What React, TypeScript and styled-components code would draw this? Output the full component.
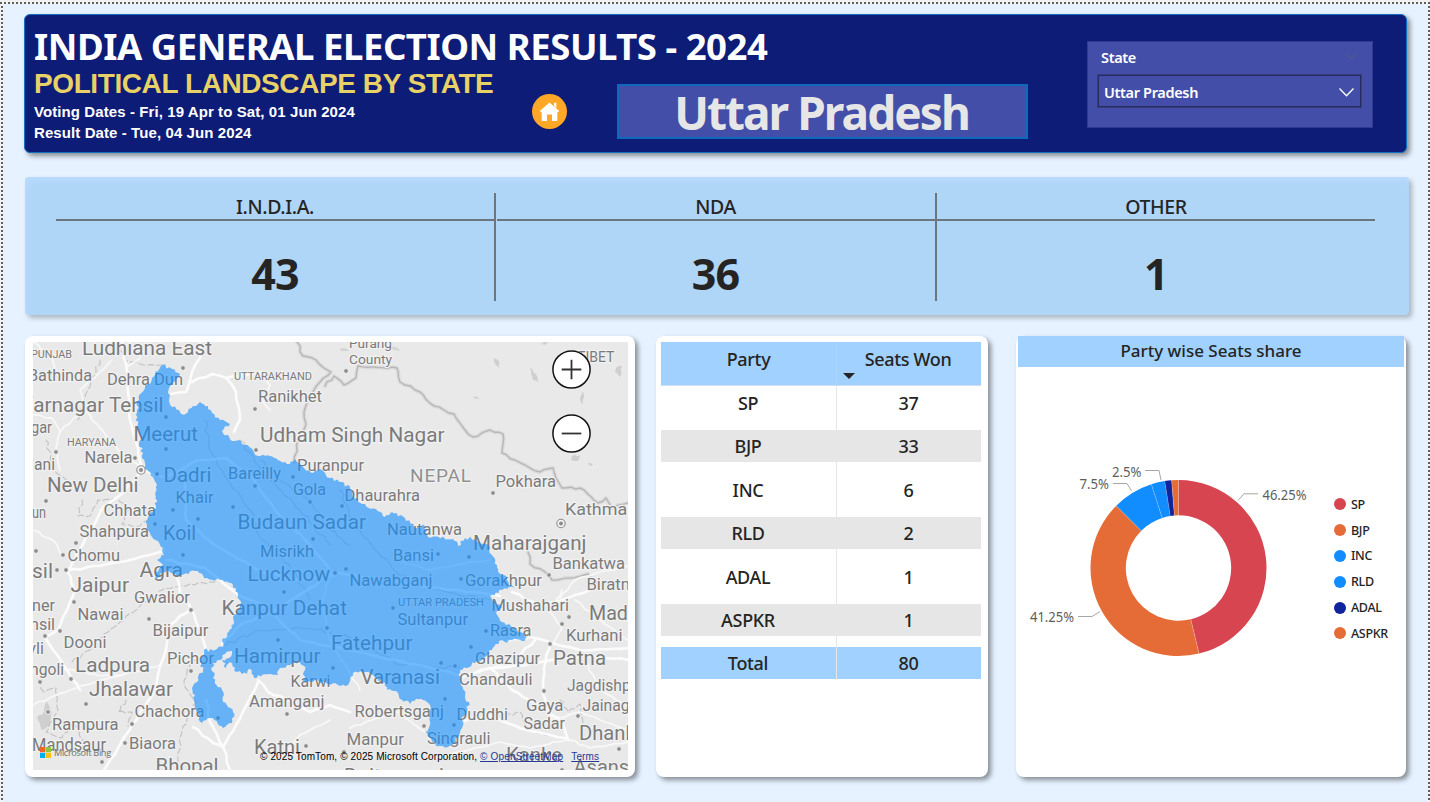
import React from "react";
import styled, { createGlobalStyle } from "styled-components";

const UI = `"Noto Sans", "Open Sans", sans-serif`;
const ARIAL = `"Liberation Sans", Arial, sans-serif`;

const GlobalStyle = createGlobalStyle`
  *, *::before, *::after { box-sizing: border-box; }
  html, body { margin: 0; padding: 0; background: #e6f2ff; }
  body { overflow: hidden; }
`;

const Page = styled.div`
  width: 1430px;
  height: 802px;
  padding: 14px 21px 0 24px;
  font-family: ${UI};
  color: #252423;
  background:
    repeating-linear-gradient(90deg, #605e5c 0 2px, #f4f4f4 2px 4px) 0 2px / 100% 2px no-repeat,
    repeating-linear-gradient(180deg, #605e5c 0 2px, #f4f4f4 2px 4px) 1px 2px / 2px 100% no-repeat,
    repeating-linear-gradient(180deg, #605e5c 0 2px, #f4f4f4 2px 4px) 1428px 2px / 2px 100% no-repeat,
    linear-gradient(#f1f1f1, #f1f1f1) 0 0 / 100% 2px no-repeat,
    linear-gradient(#f1f1f1, #f1f1f1) 0 0 / 1px 100% no-repeat,
    #e6f2ff;
`;

/* ---------- Header ---------- */

const Header = styled.header`
  display: flex;
  width: 1383px;
  height: 139px;
  padding-left: 9px;
  border: 1px solid #1170c0;
  border-radius: 6px;
  background: #0d1c76;
  box-shadow: 3px 3px 5px rgba(0, 0, 0, 0.42);
`;

const Headings = styled.div`
  width: 498px;
  padding-top: 11px;
  white-space: nowrap;
`;

const Title = styled.h1`
  margin: 0;
  font-size: 36.5px;
  line-height: 40px;
  font-weight: 700;
  letter-spacing: -0.47px;
  color: #fff;
`;

const Subtitle = styled.h2`
  margin: 1px 0 0;
  font: 700 28px/34px ${ARIAL};
  letter-spacing: -0.41px;
  color: #e8d166;
`;

const Dates = styled.p`
  margin: 0;
  font: 700 15px/21px ${ARIAL};
  letter-spacing: 0.09px;
  color: #fff;
`;

const HomeButton = styled.button`
  width: 35px;
  height: 35px;
  margin: 79px 50px 0 0;
  padding: 0;
  border: 0;
  border-radius: 50%;
  background: #ffa726;
  svg { display: block; }
`;

const StateTitle = styled.div`
  width: 411px;
  height: 55px;
  margin: 69px 59px 0 0;
  border: 2px solid #1068bd;
  background: #434ea8;
  color: #e6e6e6;
  font-size: 46px;
  line-height: 52px;
  font-weight: 700;
  letter-spacing: -1.95px;
  text-indent: -2px;
  text-align: center;
`;

const Slicer = styled.div`
  width: 286px;
  height: 87px;
  margin-top: 26px;
  padding: 5px 12px 0 10px;
  border: 1px solid #2f3a95;
  background: #434ea8;
  color: #fff;
  font-size: 14.5px;
  font-weight: 600;
  letter-spacing: -0.34px;
`;

const SlicerHead = styled.div`
  display: flex;
  align-items: center;
  justify-content: space-between;
  height: 20px;
  padding: 0 3px 0 3px;
`;

const Dropdown = styled.div`
  display: flex;
  align-items: center;
  justify-content: space-between;
  width: 263px;
  height: 32px;
  margin: 8px 0 0 0;
  padding: 2px 5px 0 5px;
  border: 1px solid #272c5e;
  outline: 0.5px solid #363d80;
`;

/* ---------- Alliance cards ---------- */

const Alliances = styled.section`
  display: grid;
  grid-template-columns: 438px 438px 438px;
  column-gap: 2.5px;
  width: 1384px;
  height: 138px;
  margin: 24px 0 0 1px;
  padding: 16px 31px 0;
  border-radius: 4px;
  background: #afd5f7;
  box-shadow: inset 2px 4px 6px #b9dbff, 3px 3px 5px rgba(0, 0, 0, 0.25);
`;

const Alliance = styled.div<{ $divided: boolean }>`
  height: 108px;
  text-align: center;
  box-shadow: ${(p) => (p.$divided ? "2px 0 0 #6c767f" : "none")};
`;

const AllianceName = styled.div`
  height: 27.5px;
  border-bottom: 2px solid #6c767f;
  font-size: 19.5px;
  line-height: 27px;
  letter-spacing: -0.38px;
  font-weight: 500;
`;

const AllianceSeats = styled.div`
  margin-top: 25px;
  font-size: 43px;
  line-height: 56px;
  font-weight: 700;
  letter-spacing: -0.8px;
`;

/* ---------- Lower row ---------- */

const Row = styled.div`
  display: flex;
  margin: 21px 0 0 1px;
`;

const Card = styled.section<{ $w: number; $gap: number }>`
  flex: none;
  width: ${(p) => p.$w}px;
  height: 441px;
  margin-right: ${(p) => p.$gap}px;
  border-radius: 8px;
  background: #fff;
  box-shadow: 3px 3px 5px rgba(0, 0, 0, 0.42);
`;

const MapCard = styled(Card)`
  position: relative;
  padding: 6px 0 0 8px;
`;

const MapSvg = styled.svg`
  display: block;
  font-family: Roboto, sans-serif;
`;

const ZoomButtons = styled.div`
  position: absolute;
  left: 526.5px;
  top: 13.7px;
  display: flex;
  flex-direction: column;
  gap: 25px;
`;

const ZoomButton = styled.button`
  display: block;
  width: 39px;
  height: 39px;
  padding: 0;
  border: 0;
  border-radius: 50%;
  background: #fff;
  svg { display: block; }
`;

const BingMark = styled.div`
  position: absolute;
  left: 15px;
  top: 410px;
  display: flex;
  align-items: center;
  gap: 3px;
  font: 500 9.2px/13px "Open Sans", sans-serif;
  letter-spacing: -0.36px;
  color: #6f6f6f;
`;

const Attribution = styled.div`
  position: absolute;
  left: 235px;
  top: 414px;
  font: 10px/13px ${ARIAL};
  letter-spacing: 0.12px;
  color: #000;
  white-space: pre;
`;

const MapLink = styled.a`
  color: #243a96;
  text-decoration: underline;
  margin-right: 8px;
  letter-spacing: 0.16px;
`;

/* ---------- Table ---------- */

const Table = styled.table`
  width: 320px;
  margin: 6px 0 0 5px;
  border-collapse: separate;
  border-spacing: 0;
  table-layout: fixed;
  font-size: 18px;
  font-weight: 500;
  letter-spacing: -0.33px;
  text-align: center;
`;

const HeadCell = styled.th`
  height: 44px;
  padding: 0;
  vertical-align: top;
  font-weight: 500;
  line-height: 35px;
  background: #a0d1ff;
  border-bottom: 1px solid #cfdfee;
  &:first-child { width: 175px; }
  & + & { border-left: 1px solid #acd5fc; padding-right: 2px; }
`;

const SortArrow = styled.span`
  display: block;
  width: 0;
  height: 0;
  margin: -4px 0 0 6px;
  border: 6px solid transparent;
  border-top-color: #252423;
  border-bottom: 0;
`;

const Cell = styled.td<{ $h: number }>`
  height: ${(p) => p.$h}px;
  padding: 0;
  vertical-align: top;
  & + & { border-left: 1px solid #e6e6e6; }
`;

const CellText = styled.div<{ $tone: string; $shift?: number }>`
  height: 32px;
  line-height: ${(p) => 34 - (p.$shift ?? 0)}px;
  padding-right: 1px;
  background: ${(p) => p.$tone};
`;

/* ---------- Donut ---------- */

const DonutTitle = styled.h3`
  margin: 0 2px;
  height: 31px;
  background: #a0d1ff;
  font-size: 17px;
  line-height: 29px;
  font-weight: 500;
  letter-spacing: 0;
  text-align: center;
`;

const DonutBody = styled.div`
  display: flex;
  padding-top: 83px;
`;

const Legend = styled.ul`
  list-style: none;
  margin: 41.5px 0 0 0;
  padding: 0;
  font-size: 12.5px;
  font-weight: 500;
  letter-spacing: -0.32px;
`;

const LegendItem = styled.li<{ $color: string }>`
  display: flex;
  align-items: center;
  gap: 5px;
  height: 25.8px;
  &::before {
    content: "";
    width: 12px;
    height: 12px;
    border-radius: 50%;
    background: ${(p) => p.$color};
  }
`;

/* ---------- Data ---------- */

const alliances = [
  { name: "I.N.D.I.A.", seats: 43 },
  { name: "NDA", seats: 36 },
  { name: "OTHER", seats: 1 },
];

const parties = [
  { name: "SP", seats: 37, color: "#d64550" },
  { name: "BJP", seats: 33, color: "#e66c37" },
  { name: "INC", seats: 6, color: "#118dff" },
  { name: "RLD", seats: 2, color: "#118dff" },
  { name: "ADAL", seats: 1, color: "#12239e" },
  { name: "ASPKR", seats: 1, color: "#e66c37" },
];

const total = parties.reduce((s, p) => s + p.seats, 0);
const rowHeights = [44, 43.5, 43.5, 43, 44, 42.6];
const textLift = [0, 2, 2, 2, 0, 2];

type Pt = [number, number];

const upOutline: Pt[] = [
  [162, 365], [172, 369], [180, 374], [176, 381], [169, 388], [169, 400], [172, 407], [179, 410], [181, 414], [188, 412],
  [193, 406], [200, 402], [208, 406], [212, 413], [220, 420], [230, 424], [222, 431], [232, 441], [241, 441], [245, 445],
  [253, 450], [258, 456], [270, 456], [278, 460], [287, 464], [295, 459], [303, 467], [313, 473], [320, 469], [330, 478],
  [350, 487], [353, 497], [365, 504], [385, 517], [392, 512], [405, 518], [414, 527], [425, 526], [428, 537], [453, 539],
  [458, 546], [465, 538], [475, 539], [488, 545], [492, 555], [497, 565], [498, 572], [507, 577], [509, 585], [515, 588],
  [502, 590], [490, 596], [495, 602], [502, 607], [496, 613], [502, 622], [517, 630], [527, 637], [522, 641], [512, 640],
  [507, 643], [499, 641], [492, 650], [475, 663], [460, 670], [461, 682], [465, 697], [469, 702], [467, 712], [462, 717],
  [462, 728], [458, 738], [452, 745], [440, 746], [432, 742], [425, 732], [430, 725], [430, 705], [423, 700], [412, 701],
  [410, 704], [402, 700], [398, 693], [387, 690], [385, 683], [375, 678], [368, 672], [353, 673], [348, 685], [338, 685],
  [328, 684], [315, 680], [303, 681], [305, 670], [300, 660], [290, 665], [280, 668], [278, 675], [258, 675], [254, 678],
  [250, 666], [247, 674], [237, 672], [230, 662], [226, 668], [222, 660], [229, 658], [232, 651], [225, 654], [220, 660],
  [213, 663], [213, 678], [222, 690], [223, 702], [233, 712],
  [232, 723], [223, 728], [210, 718], [202, 723], [195, 708], [195, 695], [192, 688], [197, 682], [203, 670], [200, 662],
  [204, 650], [215, 650], [223, 647], [222, 641], [232, 628], [233, 617], [240, 605], [238, 595], [233, 585], [220, 580],
  [207, 578], [195, 571], [177, 576], [167, 570], [155, 579], [155, 572], [163, 565], [157, 560], [164, 555], [163, 548],
  [152, 537], [147, 525], [148, 517], [156, 508], [157, 485], [147, 470], [142, 458], [139, 432], [136, 415], [139, 395],
  [145, 388], [152, 378],
];

/* Adds small deterministic jogs along every edge so a coarse outline reads as a surveyed one. */
function rough(points: Pt[], amp: number, step: number, closed: boolean) {
  let seed = 7;
  const rnd = () => {
    seed = (seed * 16807) % 2147483647;
    return seed / 2147483647 - 0.5;
  };
  let d = `M${points[0][0]} ${points[0][1]}`;
  const n = closed ? points.length : points.length - 1;
  for (let i = 0; i < n; i++) {
    const [x1, y1] = points[i];
    const [x2, y2] = points[(i + 1) % points.length];
    const len = Math.hypot(x2 - x1, y2 - y1);
    const k = Math.max(1, Math.round(len / step));
    for (let j = 1; j <= k; j++) {
      const t = j / k;
      const o = j === k ? 0 : rnd() * 2 * amp;
      const nx = -(y2 - y1) / (len || 1);
      const ny = (x2 - x1) / (len || 1);
      d += `L${(x1 + (x2 - x1) * t + nx * o).toFixed(1)} ${(y1 + (y2 - y1) * t + ny * o).toFixed(1)}`;
    }
  }
  return closed ? d + "Z" : d;
}

const majorRoads: Pt[][] = [
  [[122, 342], [127, 372], [130, 420], [138, 448], [141, 470]],
  [[138, 475], [124, 492], [104, 506], [92, 528], [70, 568], [67, 571]],
  [[67, 571], [120, 562], [164, 551]],
  [[67, 571], [75, 590], [70, 602], [58, 630], [45, 637], [62, 662], [80, 690]],
  [[176, 575], [180, 592], [191, 608], [199, 628], [206, 650]],
  [[191, 608], [170, 625], [166, 650], [160, 666], [156, 690], [133, 724], [118, 748], [104, 770]],
  [[206, 700], [210, 722], [223, 747], [236, 725], [250, 698], [258, 682]],
  [[258, 680], [268, 692], [286, 699], [310, 712], [330, 705], [350, 712]],
  [[223, 747], [230, 770]],
  [[193, 727], [213, 743], [223, 747]],
  [[200, 342], [200, 358], [192, 372], [186, 392], [171, 394]],
  [[192, 382], [212, 374], [226, 378], [238, 376], [262, 372]],
  [[226, 378], [236, 392], [240, 420], [234, 432]],
  [[462, 678], [480, 670], [530, 664], [560, 658], [590, 656], [628, 660]],
  [[507, 641], [530, 637], [552, 643], [580, 650], [628, 648]],
  [[535, 640], [512, 662], [478, 672]],
  [[490, 668], [512, 690], [540, 706], [563, 722], [568, 740]],
  [[462, 722], [490, 716], [520, 728], [565, 738]],
  [[512, 592], [540, 606], [562, 600], [590, 590]],
  [[550, 642], [544, 668], [543, 694], [552, 720]],
  [[141, 470], [165, 478], [198, 460], [226, 458], [250, 476], [275, 510], [310, 545], [335, 575]],
  [[184, 480], [186, 520], [215, 545], [262, 572], [300, 580], [335, 575]],
  [[166, 560], [205, 568], [240, 596], [262, 604], [300, 640], [360, 652], [430, 668], [462, 675]],
  [[222, 644], [240, 625], [272, 612], [310, 588], [335, 572], [380, 580], [440, 588], [500, 596]],
];

const minorRoads: Pt[][] = [
  [[33, 415], [52, 418], [60, 432], [56, 448], [60, 470]],
  [[60, 432], [74, 418], [86, 410], [80, 390], [100, 372], [112, 360]],
  [[86, 412], [100, 428], [118, 450], [140, 466]],
  [[33, 342], [50, 355], [60, 380]],
  [[150, 342], [140, 358], [128, 366]],
  [[33, 530], [55, 542], [62, 556]],
  [[262, 372], [270, 385], [262, 400], [270, 410]],
  [[350, 728], [372, 720], [398, 712], [425, 732]],
  [[33, 705], [50, 698], [70, 690], [100, 680], [150, 668]],
  [[160, 665], [120, 675], [100, 676], [60, 668]],
  [[280, 760], [300, 735], [330, 720]],
  [[560, 598], [575, 580], [600, 572], [628, 566]],
  [[575, 600], [600, 620], [628, 640]],
  [[562, 590], [550, 612], [562, 628], [553, 643]],
  [[585, 660], [600, 690], [628, 706]],
  [[552, 720], [580, 712], [628, 730]],
  [[570, 740], [590, 748], [628, 742]],
  [[430, 760], [460, 752], [500, 742], [530, 748], [566, 740]],
  [[330, 575], [322, 602], [330, 640], [360, 690]],
  [[395, 560], [430, 570], [470, 562], [490, 560]],
];

const rivers: Pt[][] = [
  [[205, 420], [210, 450], [228, 480], [250, 510], [262, 540], [290, 565], [310, 600]],
  [[260, 460], [280, 480], [310, 500], [330, 530], [350, 545]],
  [[340, 490], [352, 520], [372, 545], [400, 575], [440, 590], [490, 600]],
  [[225, 645], [260, 630], [310, 628], [360, 640], [400, 665], [460, 668]],
  [[240, 440], [262, 470], [300, 510], [330, 545]],
];

const stateLines: Pt[][] = [
  [[118, 342], [125, 360], [140, 364], [162, 365]],
  [[100, 360], [88, 390], [78, 420]],
  [[46, 440], [54, 470], [70, 482]],
  [[82, 500], [78, 516], [90, 516], [98, 500], [118, 498], [128, 510], [122, 524], [140, 526], [150, 518]],
  [[38, 680], [44, 692], [56, 688], [58, 710], [46, 732], [62, 738], [74, 722], [84, 742]],
  [[126, 700], [118, 712], [132, 712], [128, 726]],
  [[72, 662], [90, 650], [104, 634], [120, 622], [140, 606], [165, 588], [190, 584], [215, 582]],
  [[206, 655], [190, 662], [184, 684], [196, 702], [182, 730], [178, 762]],
  [[560, 700], [568, 712], [580, 704], [584, 726], [604, 736]],
  [[505, 716], [520, 712], [528, 730], [552, 736]],
];

const nepalBorders: Pt[][] = [
  [[297, 342], [303, 356], [316, 360], [324, 368], [331, 372], [320, 382], [310, 396], [304, 412], [306, 424], [298, 440], [294, 462]],
  [[325, 386], [334, 376], [344, 385], [356, 378], [358, 366], [397, 368], [400, 382], [420, 392], [434, 406], [454, 414], [465, 430], [473, 437], [490, 430], [503, 434], [502, 453], [515, 460], [525, 465], [540, 472], [553, 468], [556, 478], [562, 488], [580, 488], [598, 503], [606, 498], [612, 508], [628, 503]],
  [[528, 552], [530, 564], [545, 572], [552, 580], [570, 578], [588, 574], [600, 586]],
];

const ghostPatches: Pt[][] = [
  [[494, 358], [498, 360], [500, 368], [495, 364]],
  [[530, 368], [536, 374], [538, 382], [533, 380]],
  [[582, 391], [584, 397], [583, 404], [580, 400]],
  [[616, 368], [622, 366], [620, 377], [615, 372]],
  [[572, 456], [580, 455], [578, 461], [571, 460]],
  [[541, 344], [548, 342], [545, 345]],
  [[473, 397], [482, 398], [478, 399]],
  [[588, 463], [593, 465], [590, 466]],
  [[37, 718], [44, 712], [46, 700], [52, 712], [50, 726], [42, 730]],
];

/* text, left, baseline, width, size */
type Label = [string, number, number, number, number];
const labels: Label[] = [
  ["PUNJAB", 31, 358, 41, 11.5], ["Ludhiana East", 82, 354.5, 130, 20], ["Bathinda", 28, 381, 64, 16],
  ["Dehra Dun", 107, 385, 76, 16], ["UTTARAKHAND", 234, 379.7, 78, 11.5], ["Ranikhet", 258, 402, 64, 16],
  ["farnagar Tehsil", 26, 411.5, 137.5, 20], ["gar", 31, 433, 21, 16], ["Meerut", 133.5, 441, 64.5, 20],
  ["HARYANA", 67, 445.5, 49, 11.5], ["Udham Singh Nagar", 260, 442.3, 184.5, 20], ["Narela", 84.5, 462.7, 48, 16],
  ["ani", 34, 469.5, 21, 16], ["Dadri", 163.5, 482, 48, 20], ["Bareilly", 228, 479, 53, 16],
  ["Puranpur", 297, 470.7, 67, 16], ["Gola", 293, 495, 33, 16], ["New Delhi", 47, 492, 91.5, 20],
  ["Khair", 175.5, 502.5, 38, 16], ["un", 32, 517.5, 14, 16], ["Chhata", 103.5, 516, 52.5, 16],
  ["Budaun Sadar", 237.5, 528.5, 128.5, 20], ["Shahpura", 79.5, 537, 69.5, 16], ["Koil", 163, 540, 33, 20],
  ["Misrikh", 260, 556.5, 54, 16], ["Chomu", 67.5, 560.5, 52.5, 16], ["Purang", 349, 348, 43, 13.5],
  ["County", 349, 363.5, 43, 13.5], ["Pokhara", 495.5, 487, 60.5, 16], ["Dhaurahra", 344.5, 500.5, 75.5, 16],
  ["Kathmandu", 565, 515.3, 92, 16], ["Nautanwa", 387, 535, 75, 16], ["Maharajganj", 473, 549.5, 113.5, 20],
  ["Bansi", 393, 560.5, 41, 16], ["Bankatwa", 552.5, 568.7, 72.5, 16], ["Nawabganj", 349.5, 586, 83, 16],
  ["Gorakhpur", 465, 586, 77, 16], ["Biratnagar", 586.5, 589.7, 76.5, 16], ["UTTAR PRADESH", 398, 605.7, 86, 11.5],
  ["Mushahari", 491.5, 610.5, 77.5, 16], ["Madhubani", 589, 619.5, 98, 20], ["Sultanpur", 397.5, 625, 70.5, 16],
  ["Rasra", 490, 636, 41.5, 16], ["Kurhani", 566, 641, 56.5, 16], ["Fatehpur", 331, 650, 81.5, 20],
  ["Ghazipur", 475, 664, 65, 16], ["Patna", 553, 664.7, 53, 20], ["Varanasi", 360.5, 684, 79.5, 20],
  ["Chandauli", 459, 684.5, 73.5, 16], ["Jagdishpur", 567, 691, 77.5, 16], ["Gaya", 526, 710.5, 37.5, 16],
  ["Jainagar", 582.5, 710.5, 61, 16], ["Robertsganj", 354.5, 716.5, 89.5, 16], ["Duddhi", 456.5, 719.7, 51.5, 16],
  ["Sadar", 523.5, 729, 41.5, 16], ["Dhanbad", 579, 740, 80, 20], ["Manpur", 346.5, 745, 57.5, 16],
  ["Singrauli", 427, 743.7, 63.5, 16], ["Kanke", 506, 761.5, 56, 20], ["Asansol", 573.5, 774, 72, 20],
  ["Daltonganj", 344, 783, 100, 20], ["sil", 32, 577.5, 21, 20], ["Agra", 139.5, 577, 43.5, 20],
  ["Lucknow", 247.5, 580.5, 82.5, 20], ["Jaipur", 70.5, 591.7, 58.5, 20], ["Gwalior", 134, 603, 56, 16],
  ["ner", 32, 611, 23, 16], ["Kanpur Dehat", 221.5, 614.5, 125.5, 20], ["nsil", 30, 629.5, 25, 16],
  ["Nawai", 77.5, 620.2, 46, 16], ["Bijaipur", 152.5, 636, 56, 16], ["Dooni", 63.5, 647.7, 43, 16],
  ["vli", 28, 653.5, 16, 16], ["Pichor", 167, 663.5, 47, 16], ["Hamirpur", 234, 662.7, 86.5, 20],
  ["Ladpura", 75, 671.7, 75, 20], ["ngoli", 30, 675, 34, 16], ["Karwi", 290.5, 686.5, 40, 16],
  ["Jhalawar", 89, 695.7, 84, 20], ["Amanganj", 249, 707, 75.5, 16], ["Chachora", 134.5, 717, 70, 16],
  ["Rampura", 52, 729.7, 66.5, 16], ["Mandsaur", 32, 750.5, 74, 17.5], ["Biaora", 129, 748.5, 47, 16],
  ["Katni", 254, 754, 46, 20], ["Bhopal", 155.5, 773, 63, 20], ["TIBET", 577, 362.3, 37.5, 14],
];

const towns: Pt[] = [
  [183, 368], [166, 417], [255, 409], [56, 452], [166, 449], [256, 450], [135, 458], [157, 474], [293, 477], [255, 486],
  [310, 502], [46, 501], [173, 510], [233, 507], [198, 519], [155, 524], [76, 543], [63, 555], [313, 539], [36, 551],
  [183, 555], [346, 371], [493, 493], [342, 506], [438, 554], [469, 557], [57, 570], [66, 570], [284, 592], [335, 573],
  [346, 569], [461, 579], [549, 575], [569, 617], [562, 624], [393, 608], [486, 631], [550, 644], [471, 647], [441, 663],
  [455, 666], [333, 668], [445, 699], [544, 691], [578, 716], [424, 726], [454, 725], [191, 610], [149, 619], [74, 602],
  [60, 631], [45, 636], [327, 628], [278, 640], [191, 671], [71, 679], [40, 682], [86, 704], [132, 724], [48, 712],
  [287, 714], [218, 718], [125, 743], [306, 746], [102, 762], [344, 752], [619, 749], [562, 770],
];

const capitals: Pt[] = [[141, 470], [561, 523.5]];

function UttarPradeshMap() {
  const region = rough(upOutline, 1.8, 2.4, true);
  return (
    <MapSvg width="595" height="428" viewBox="33 342 595 428">
      <rect x="33" y="342" width="595" height="428" fill="#e9e9e9" />
      {ghostPatches.map((p, i) => (
        <path key={i} d={rough(p, 1, 3, true)} fill="#cfcfcf" />
      ))}
      <path d="M340 349q6-3 9 2l-8 0zM388 346q10 0 12 5l-10-2z" fill="#d3d3d3" />
      <g fill="none" strokeLinejoin="round" strokeLinecap="round">
        {stateLines.map((p, i) => (
          <path key={i} d={rough(p, 1.6, 4, false)} stroke="#c2c2c2" strokeWidth="1.1" strokeDasharray="6 3" />
        ))}
        {rivers.map((p, i) => (
          <path key={i} d={rough(p, 2, 5, false)} stroke="#cdcdcd" strokeWidth="1.2" />
        ))}
        {nepalBorders.map((p, i) => (
          <g key={i}>
            <path d={rough(p, 1.3, 5, false)} stroke="#dcdcdc" strokeWidth="4" />
            <path d={rough(p, 1.3, 5, false)} stroke="#b9b6b6" strokeWidth="1.4" />
          </g>
        ))}
        {minorRoads.map((p, i) => (
          <path key={i} d={rough(p, 1, 6, false)} stroke="#f8f8f8" strokeWidth="1.8" />
        ))}
        {majorRoads.map((p, i) => (
          <path key={i} d={rough(p, 1, 7, false)} stroke="#fcfcfc" strokeWidth="2.6" />
        ))}
      </g>
      {towns.map(([x, y], i) => (
        <circle key={i} cx={x} cy={y} r="2.4" fill="#8c8c8c" stroke="#f2f2f2" strokeWidth="1" />
      ))}
      {capitals.map(([x, y], i) => (
        <g key={i}>
          <circle cx={x} cy={y} r="4.2" fill="#f2f2f2" stroke="#8c8c8c" strokeWidth="1.1" />
          <circle cx={x} cy={y} r="2" fill="#8c8c8c" />
        </g>
      ))}
      <g fill="#7b7b7b" stroke="#f1f1f1" strokeWidth="2.4" strokeLinejoin="round" paintOrder="stroke">
        {labels.map(([t, x, y, w, s], i) => (
          <text key={i} x={x} y={y} fontSize={s} textLength={w} lengthAdjust="spacingAndGlyphs">
            {t}
          </text>
        ))}
        <text x="410" y="482.3" fontSize="19" textLength="61" fill="#919191">
          NEPAL
        </text>
      </g>
      <path d={region} fill="#118dff" fillOpacity="0.6" />
    </MapSvg>
  );
}

const cx = 162.5;
const cy = 118;
const R = 88;
const r = 52.7;

function at(angle: number, radius: number) {
  return `${(cx + Math.sin(angle) * radius).toFixed(2)} ${(cy - Math.cos(angle) * radius).toFixed(2)}`;
}

function Donut() {
  let acc = 0;
  const slices = parties.map((p) => {
    const a0 = (acc / total) * Math.PI * 2;
    acc += p.seats;
    const a1 = (acc / total) * Math.PI * 2;
    const large = a1 - a0 > Math.PI ? 1 : 0;
    return {
      ...p,
      a0,
      d: `M${at(a0, R)}A${R} ${R} 0 ${large} 1 ${at(a1, R)}L${at(a1, r)}A${r} ${r} 0 ${large} 0 ${at(a0, r)}Z`,
    };
  });
  return (
    <svg width="318" height="230" viewBox="0 0 318 230" fontFamily={UI} fontSize="14" fill="#605e5c">
      {slices.map((s) => (
        <path key={s.name} d={s.d} fill={s.color} />
      ))}
      {slices.map((s) => (
        <path key={s.name} d={`M${at(s.a0, R)}L${at(s.a0, r)}`} stroke="#fff" strokeOpacity="0.4" strokeWidth="0.6" />
      ))}
      <g fill="none" stroke="#a9a7a5" strokeWidth="1">
        <path d="M222 50.5L228 43.8H242" />
        <path d="M84 161.5L76 166.5H62" />
        <path d="M115.500 41L111 33.500H97" />
        <path d="M145 30L143 20.500H129" />
      </g>
      <text x="246.500" y="50" textLength="44" lengthAdjust="spacingAndGlyphs">46.25%</text>
      <text x="14" y="172" textLength="44" lengthAdjust="spacingAndGlyphs">41.25%</text>
      <text x="63.500" y="39" textLength="29.500" lengthAdjust="spacingAndGlyphs">7.5%</text>
      <text x="96" y="27" textLength="29.500" lengthAdjust="spacingAndGlyphs">2.5%</text>
    </svg>
  );
}

export default function App() {
  return (
    <>
      <GlobalStyle />
      <Page>
        <Header>
          <Headings>
            <Title>INDIA GENERAL ELECTION RESULTS - 2024</Title>
            <Subtitle>POLITICAL LANDSCAPE BY STATE</Subtitle>
            <Dates>Voting Dates - Fri, 19 Apr to Sat, 01 Jun 2024</Dates>
            <Dates>Result Date - Tue, 04 Jun 2024</Dates>
          </Headings>
          <HomeButton aria-label="Home">
            <svg width="35" height="35" viewBox="0 0 35 35" fill="#fff">
              <path d="M17.500 8.500L27.200 17L25.800 18.400L25.300 18V27H20V20.500H15V27H9.700V18L9.200 18.400L7.800 17ZM22 8.700H24.300V14L22 12Z" />
            </svg>
          </HomeButton>
          <StateTitle>Uttar Pradesh</StateTitle>
          <Slicer>
            <SlicerHead>
              State
              <svg width="12" height="8" viewBox="0 0 12 8" fill="none" stroke="#55588a" strokeWidth="1.1">
                <path d="M1 1L6 6.300L11 1" />
              </svg>
            </SlicerHead>
            <Dropdown>
              Uttar Pradesh
              <svg width="17" height="11" viewBox="0 0 17 11" fill="none" stroke="#fff" strokeWidth="1.300">
                <path d="M1.500 1.500L8.500 8.800L15.500 1.500" />
              </svg>
            </Dropdown>
          </Slicer>
        </Header>

        <Alliances>
          {alliances.map((a, i) => (
            <Alliance key={a.name} $divided={i < 2}>
              <AllianceName>{a.name}</AllianceName>
              <AllianceSeats>{a.seats}</AllianceSeats>
            </Alliance>
          ))}
        </Alliances>

        <Row>
          <MapCard $w={610} $gap={21}>
            <UttarPradeshMap />
            <ZoomButtons>
              <ZoomButton aria-label="Zoom in">
                <svg width="39" height="39" viewBox="0 0 39 39" fill="none">
                  <circle cx="19.500" cy="19.500" r="18.600" stroke="#111" strokeWidth="1.500" />
                  <path d="M9.700 19.500H29.300M19.500 9.700V29.300" stroke="#333" strokeWidth="1.800" />
                </svg>
              </ZoomButton>
              <ZoomButton aria-label="Zoom out">
                <svg width="39" height="39" viewBox="0 0 39 39" fill="none">
                  <circle cx="19.500" cy="19.500" r="18.600" stroke="#111" strokeWidth="1.500" />
                  <path d="M9.700 19.500H29.300" stroke="#333" strokeWidth="1.800" />
                </svg>
              </ZoomButton>
            </ZoomButtons>
            <BingMark>
              <svg width="11" height="11" viewBox="0 0 11 11">
                <path d="M0 0h5.200v5.200H0z" fill="#f1652a" />
                <path d="M5.800 0H11v5.200H5.800z" fill="#8cc63f" />
                <path d="M0 5.800h5.200V11H0z" fill="#00adef" />
                <path d="M5.800 5.800H11V11H5.800z" fill="#ffc20e" />
              </svg>
              Microsoft Bing
            </BingMark>
            <Attribution>
              {"© 2025 TomTom, © 2025 Microsoft Corporation, "}
              <MapLink>© OpenStreetMap</MapLink>
              <MapLink>Terms</MapLink>
            </Attribution>
          </MapCard>

          <Card $w={332} $gap={28}>
            <Table>
              <thead>
                <tr>
                  <HeadCell>Party</HeadCell>
                  <HeadCell>
                    Seats Won
                    <SortArrow />
                  </HeadCell>
                </tr>
              </thead>
              <tbody>
                {parties.map((p, i) => (
                  <tr key={p.name}>
                    <Cell $h={rowHeights[i]}>
                      <CellText $tone={i % 2 ? "#e6e6e6" : "#fff"} $shift={textLift[i]}>{p.name}</CellText>
                    </Cell>
                    <Cell $h={rowHeights[i]}>
                      <CellText $tone={i % 2 ? "#e6e6e6" : "#fff"} $shift={textLift[i]}>{p.seats}</CellText>
                    </Cell>
                  </tr>
                ))}
                <tr>
                  <Cell $h={32}>
                    <CellText $tone="#a0d1ff" $shift={2}>Total</CellText>
                  </Cell>
                  <Cell $h={32}>
                    <CellText $tone="#a0d1ff" $shift={2}>{total}</CellText>
                  </Cell>
                </tr>
              </tbody>
            </Table>
          </Card>

          <Card $w={390} $gap={0}>
            <DonutTitle>Party wise Seats share</DonutTitle>
            <DonutBody>
              <Donut />
              <Legend>
                {parties.map((p) => (
                  <LegendItem key={p.name} $color={p.color}>
                    {p.name}
                  </LegendItem>
                ))}
              </Legend>
            </DonutBody>
          </Card>
        </Row>
      </Page>
    </>
  );
}
